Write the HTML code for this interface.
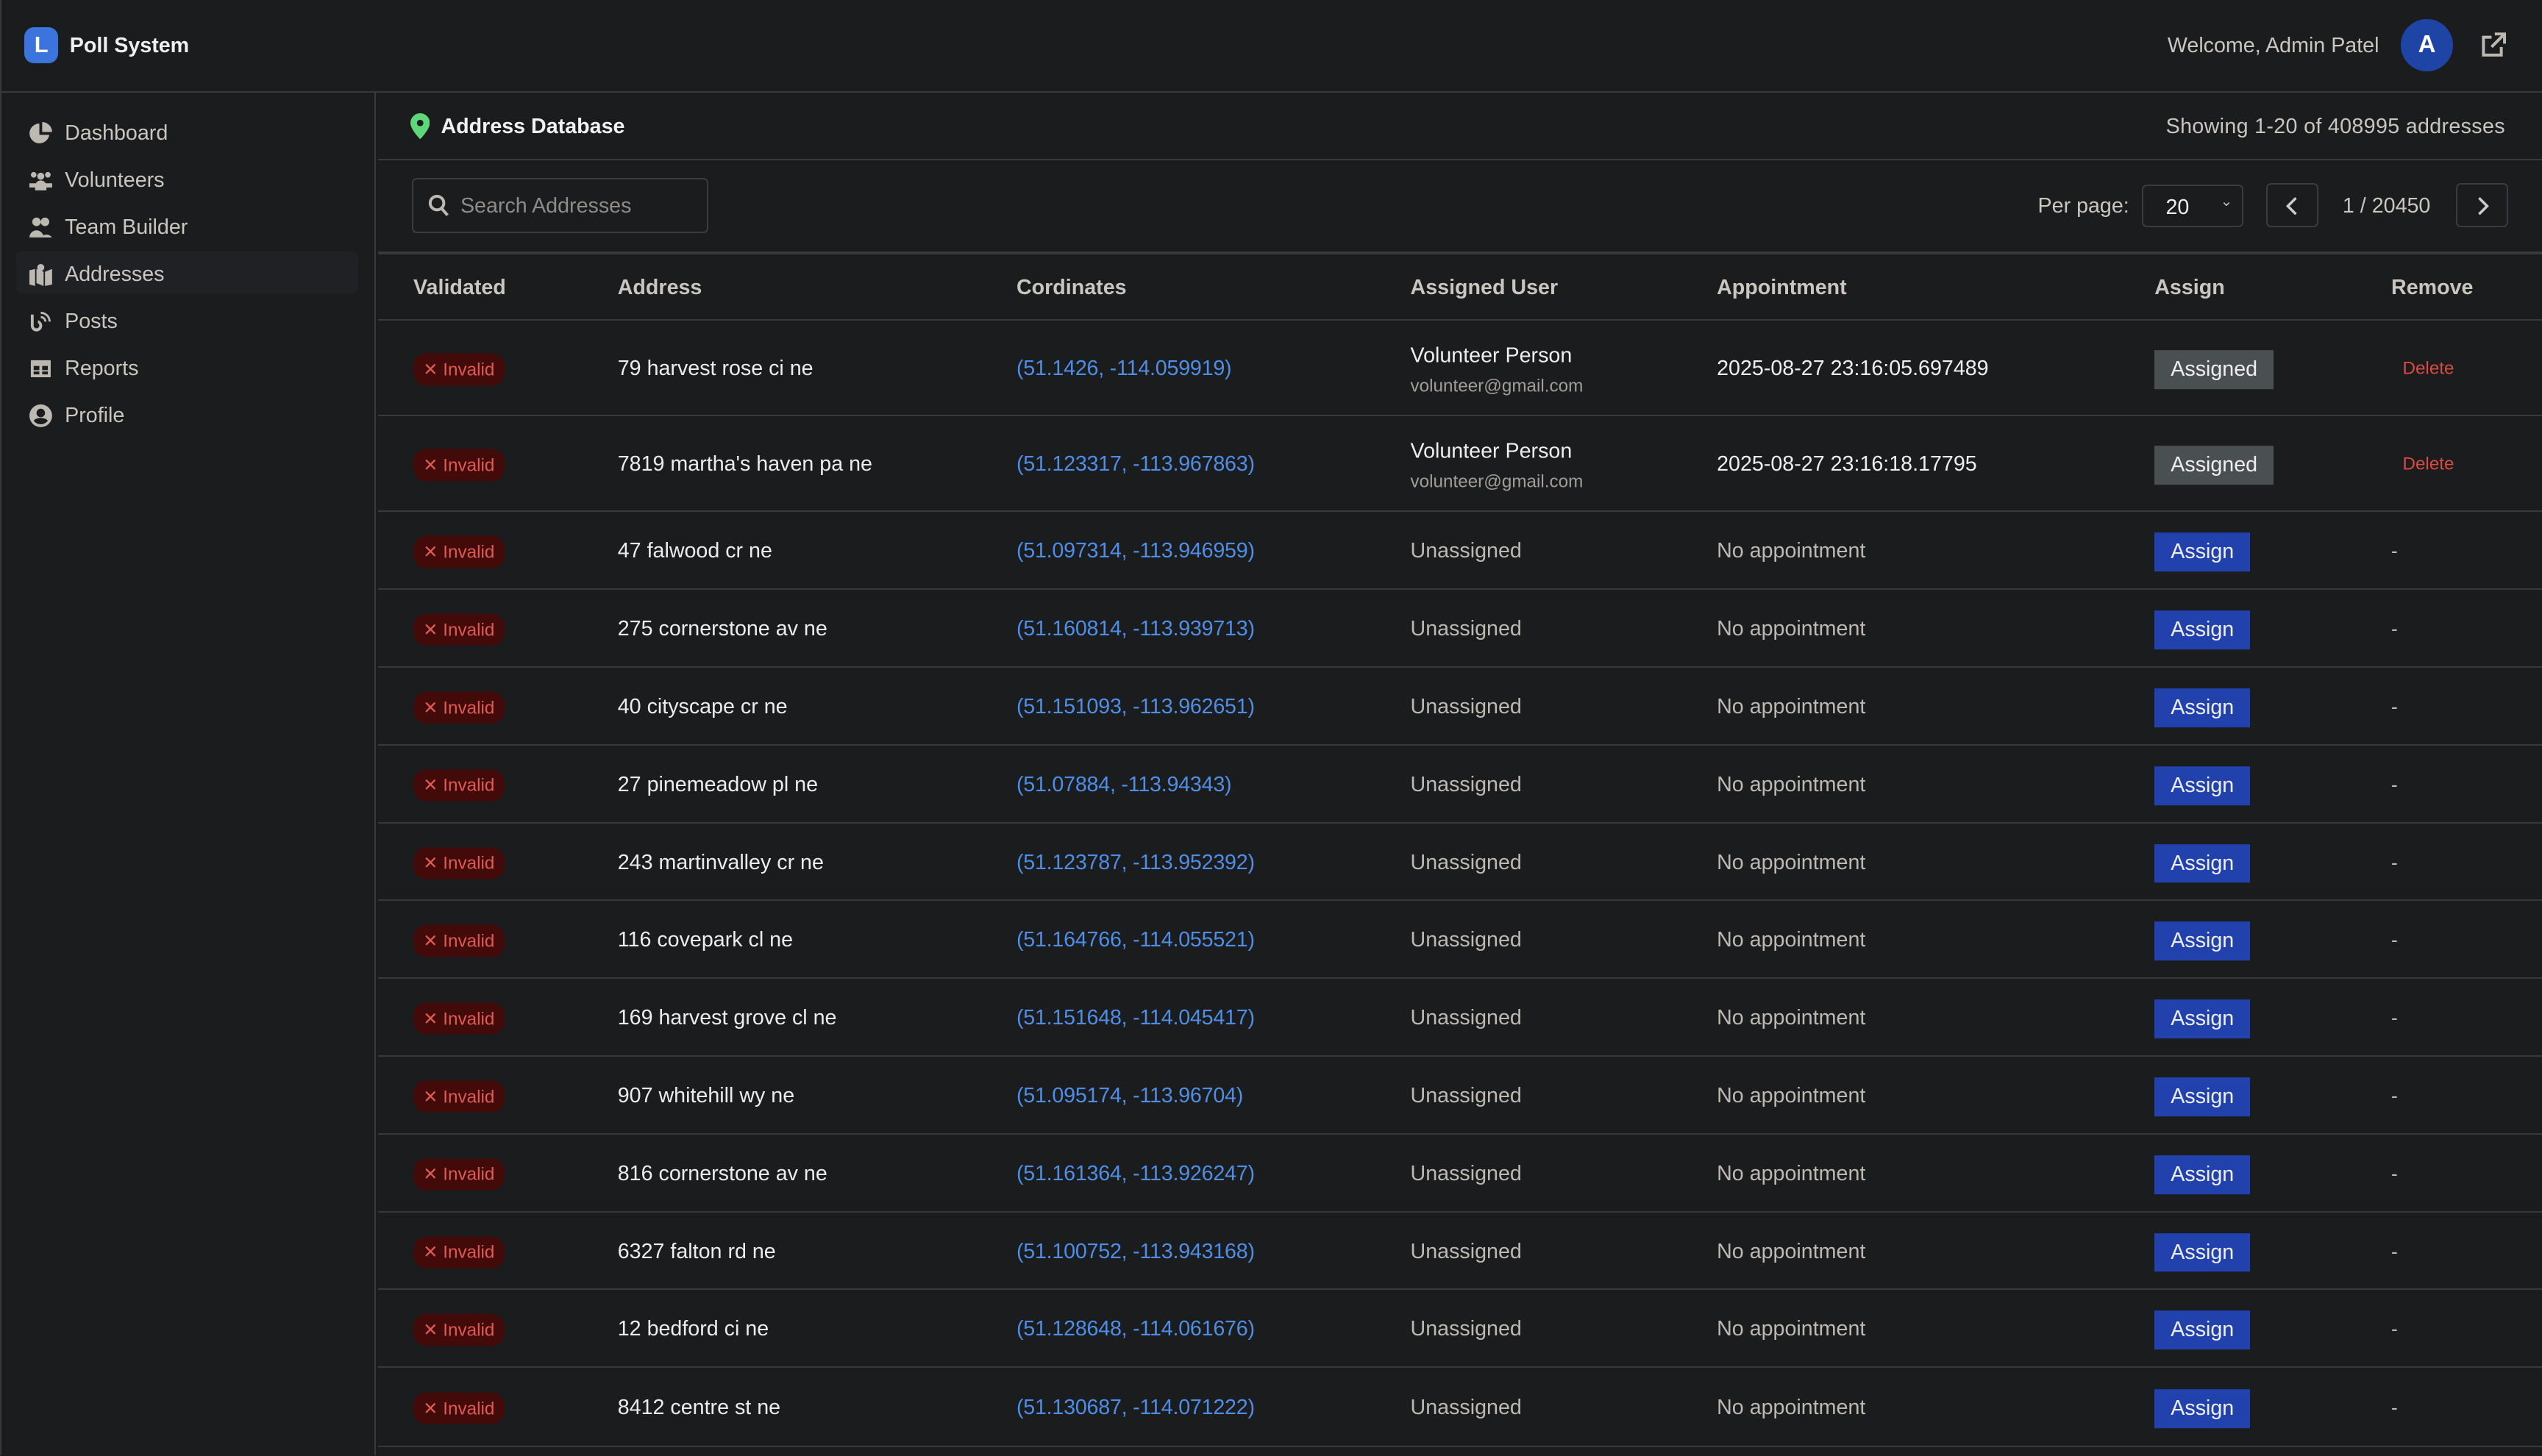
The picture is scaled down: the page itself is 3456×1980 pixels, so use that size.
<!DOCTYPE html>
<html><head><meta charset="utf-8"><style>
html{zoom:2.2041}
*{box-sizing:border-box;margin:0;padding:0}
body{width:1568px;height:898px;overflow:hidden;background:#1b1c1e;font-family:"Liberation Sans",sans-serif;color:#e6e6e6;font-size:13px;position:relative}
.abs{position:absolute}
.hdr{left:0;top:0;width:1568px;height:57px;border-bottom:1px solid #38393b;border-left:1px solid #38393b}
.side{left:0;top:57px;width:232px;height:841px;border-right:1px solid #38393b;border-left:1px solid #38393b}
.nav{position:absolute;left:18px;color:#c9c6c0;font-size:13px;display:flex;align-items:center}
.nav svg{width:14px;height:14px;margin-right:8px;fill:#bdb9b2}
.row{position:absolute;left:233px;width:1335px;border-bottom:1px solid #38393b}
.c{position:absolute;top:50%;transform:translateY(-45%);white-space:nowrap}
.bad{left:22px;background:#430a0a;color:#e05a55;font-size:11px;padding:3px 6px;border-radius:8px}
.addr{left:148px;color:#ececec}
.co{left:394px;color:#4f8ee6;letter-spacing:-0.1px}
.un{left:637px;color:#bcb9b3}
.ap{left:826px;color:#bcb9b3}
.btn{left:1096px;background:#2142ad;color:#eee;height:24px;line-height:24px;padding:0 10px}
.gbtn{left:1096px;background:#4a4f52;color:#eee;height:24px;line-height:24px;padding:0 10px}
.rm{left:1242px;color:#bbb;font-size:12px}
.del{left:1249px;color:#d94a42;font-size:11px}
</style></head><body>
<div class="abs hdr"></div>
<div class="abs" style="left:15px;top:17px;width:21px;height:22px;border-radius:6px;background:#3b74dc;color:#fff;font-weight:bold;font-size:14px;text-align:center;line-height:22px">L</div>
<div class="abs" style="left:43px;top:21px;font-size:13px;color:#f0f0f0;font-weight:600">Poll System</div>
<div class="abs" style="left:1337px;top:21px;color:#c9c6c0">Welcome, Admin Patel</div>
<div class="abs" style="left:1481px;top:12px;width:32px;height:32px;border-radius:50%;background:#1e44a6;color:#fff;font-weight:bold;text-align:center;line-height:32px;font-size:15px">A</div>
<svg class="abs" style="left:1530px;top:20px" width="16" height="16" viewBox="0 0 16 16" fill="none" stroke="#bdb9b2" stroke-width="1.8"><path d="M7 3H2v11h11V9"/><path d="M9 1h6v6M15 1L7 9"/></svg>
<div class="abs side"></div>
<div class="abs" style="left:10px;top:155px;width:211px;height:26px;background:#202124;border-radius:4px"></div>
<div class="nav" style="top:75px"><svg viewBox="0 0 16 16"><path d="M7 1a7 7 0 1 0 7 8H7z"/><path d="M9 0v7h7a7 7 0 0 0-7-7z"/></svg>Dashboard</div>
<div class="nav" style="top:104px"><svg viewBox="0 0 16 16"><circle cx="3" cy="4" r="2"/><circle cx="13" cy="4" r="2"/><circle cx="8" cy="5" r="2.5"/><path d="M0 10h5v3H0zM11 10h5v3h-5zM4 12a4 4 0 0 1 8 0v3H4z"/></svg>Volunteers</div>
<div class="nav" style="top:133px"><svg viewBox="0 0 16 16"><circle cx="5" cy="4" r="3"/><circle cx="11" cy="4" r="3"/><path d="M0 15a5 5 0 0 1 10 0zM8 15a5 5 0 0 1 8 0z"/></svg>Team Builder</div>
<div class="nav" style="top:162px"><svg viewBox="0 0 16 16"><path d="M0 5l4-1v12l-4-1zM5 4l5 2v10l-5-2zM11 6l5-2v11l-5 1z"/><circle cx="8" cy="3" r="2.5"/></svg>Addresses</div>
<div class="nav" style="top:191px"><svg viewBox="0 0 16 16"><path d="M1 3h2v8a2 2 0 1 0 3-2V7a4 4 0 1 1-5 4z"/><path d="M8 1a7 7 0 0 1 7 7h-1.5A5.5 5.5 0 0 0 8 2.5zM8 4a4 4 0 0 1 4 4h-1.5A2.5 2.5 0 0 0 8 5.5z"/></svg>Posts</div>
<div class="nav" style="top:220px"><svg viewBox="0 0 16 16"><path d="M1 2h14v12H1zM3 6v3h4V6zm6 0v3h4V6zM3 10v2h4v-2zm6 0v2h4v-2z" fill-rule="evenodd"/></svg>Reports</div>
<div class="nav" style="top:249px"><svg viewBox="0 0 16 16"><path d="M8 0a8 8 0 1 0 0 16A8 8 0 0 0 8 0zm0 3a3 3 0 1 1 0 6 3 3 0 0 1 0-6zm0 11a6 6 0 0 1-5-2.5c1-1.5 3-2 5-2s4 .5 5 2A6 6 0 0 1 8 14z"/></svg>Profile</div>

<div class="abs" style="left:233px;top:58px;width:1335px;height:41px;border-bottom:1px solid #38393b"></div>
<svg class="abs" style="left:253px;top:70px" width="12" height="16" viewBox="0 0 12 16"><path d="M6 0a6 6 0 0 0-6 6c0 4 6 10 6 10s6-6 6-10a6 6 0 0 0-6-6z" fill="#5fd67a"/><circle cx="6" cy="6" r="2" fill="#1b1c1e"/></svg>
<div class="abs" style="left:272px;top:71px;color:#f2f2f2;font-size:13px;font-weight:600">Address Database</div>
<div class="abs" style="left:1336px;top:71px;color:#c9c6c0;letter-spacing:0.15px">Showing 1-20 of 408995 addresses</div>

<div class="abs" style="left:233px;top:99px;width:1335px;height:58px;border-bottom:2px solid #38393b"></div>
<div class="abs" style="left:254px;top:110px;width:183px;height:34px;border:1px solid #3a3b3e;border-radius:3px"></div>
<svg class="abs" style="left:264px;top:120px" width="13" height="14" viewBox="0 0 13 14" fill="none" stroke="#bdb9b2" stroke-width="1.8"><circle cx="5.5" cy="5.5" r="4.2"/><path d="M8.5 9l3.5 4"/></svg>
<div class="abs" style="left:284px;top:120px;color:#8e8c88">Search Addresses</div>
<div class="abs" style="left:1257px;top:120px;color:#c9c6c0">Per page:</div>
<div class="abs" style="left:1321px;top:114px;width:63px;height:26px;border:1px solid #3a3b3e;border-radius:3px;color:#eee;padding:6px 0 0 14px">20<span style="position:absolute;right:6px;top:4px;font-size:9px;color:#bbb">&#8964;</span></div>
<div class="abs" style="left:1398px;top:113px;width:32px;height:27px;border:1px solid #3a3b3e;border-radius:3px"></div>
<svg class="abs" style="left:1409px;top:121px" width="9" height="12" viewBox="0 0 9 12" fill="none" stroke="#ccc" stroke-width="1.6"><path d="M7 1L2 6l5 5"/></svg>
<div class="abs" style="left:1445px;top:120px;color:#c9c6c0">1 / 20450</div>
<div class="abs" style="left:1515px;top:113px;width:32px;height:27px;border:1px solid #3a3b3e;border-radius:3px"></div>
<svg class="abs" style="left:1527px;top:121px" width="9" height="12" viewBox="0 0 9 12" fill="none" stroke="#ccc" stroke-width="1.6"><path d="M2 1l5 5-5 5"/></svg>

<div class="row" style="top:157px;height:41px;font-weight:bold;color:#c9c6c0">
<div class="c" style="left:22px">Validated</div><div class="c" style="left:148px">Address</div><div class="c" style="left:394px">Cordinates</div><div class="c" style="left:637px">Assigned User</div><div class="c" style="left:826px">Appointment</div><div class="c" style="left:1096px">Assign</div><div class="c" style="left:1242px">Remove</div></div>

<div class="row" style="top:198px;height:59px"><span class="c bad">✕ Invalid</span><span class="c addr">79 harvest rose ci ne</span><span class="c co">(51.1426, -114.059919)</span><div class="c" style="left:637px"><div style="color:#eee">Volunteer Person</div><div style="color:#a19e99;font-size:11px;margin-top:5px">volunteer@gmail.com</div></div><span class="c" style="left:826px;color:#eee">2025-08-27 23:16:05.697489</span><span class="c gbtn">Assigned</span><span class="c del">Delete</span></div>
<div class="row" style="top:257px;height:59px"><span class="c bad">✕ Invalid</span><span class="c addr">7819 martha's haven pa ne</span><span class="c co">(51.123317, -113.967863)</span><div class="c" style="left:637px"><div style="color:#eee">Volunteer Person</div><div style="color:#a19e99;font-size:11px;margin-top:5px">volunteer@gmail.com</div></div><span class="c" style="left:826px;color:#eee">2025-08-27 23:16:18.17795</span><span class="c gbtn">Assigned</span><span class="c del">Delete</span></div>

<div class="row" style="top:316px;height:48px"><span class="c bad">✕ Invalid</span><span class="c addr">47 falwood cr ne</span><span class="c co">(51.097314, -113.946959)</span><span class="c un">Unassigned</span><span class="c ap">No appointment</span><span class="c btn">Assign</span><span class="c rm">-</span></div>
<div class="row" style="top:364px;height:48px"><span class="c bad">✕ Invalid</span><span class="c addr">275 cornerstone av ne</span><span class="c co">(51.160814, -113.939713)</span><span class="c un">Unassigned</span><span class="c ap">No appointment</span><span class="c btn">Assign</span><span class="c rm">-</span></div>
<div class="row" style="top:412px;height:48px"><span class="c bad">✕ Invalid</span><span class="c addr">40 cityscape cr ne</span><span class="c co">(51.151093, -113.962651)</span><span class="c un">Unassigned</span><span class="c ap">No appointment</span><span class="c btn">Assign</span><span class="c rm">-</span></div>
<div class="row" style="top:460px;height:48px"><span class="c bad">✕ Invalid</span><span class="c addr">27 pinemeadow pl ne</span><span class="c co">(51.07884, -113.94343)</span><span class="c un">Unassigned</span><span class="c ap">No appointment</span><span class="c btn">Assign</span><span class="c rm">-</span></div>
<div class="row" style="top:508px;height:48px"><span class="c bad">✕ Invalid</span><span class="c addr">243 martinvalley cr ne</span><span class="c co">(51.123787, -113.952392)</span><span class="c un">Unassigned</span><span class="c ap">No appointment</span><span class="c btn">Assign</span><span class="c rm">-</span></div>
<div class="row" style="top:556px;height:48px"><span class="c bad">✕ Invalid</span><span class="c addr">116 covepark cl ne</span><span class="c co">(51.164766, -114.055521)</span><span class="c un">Unassigned</span><span class="c ap">No appointment</span><span class="c btn">Assign</span><span class="c rm">-</span></div>
<div class="row" style="top:604px;height:48px"><span class="c bad">✕ Invalid</span><span class="c addr">169 harvest grove cl ne</span><span class="c co">(51.151648, -114.045417)</span><span class="c un">Unassigned</span><span class="c ap">No appointment</span><span class="c btn">Assign</span><span class="c rm">-</span></div>
<div class="row" style="top:652px;height:48px"><span class="c bad">✕ Invalid</span><span class="c addr">907 whitehill wy ne</span><span class="c co">(51.095174, -113.96704)</span><span class="c un">Unassigned</span><span class="c ap">No appointment</span><span class="c btn">Assign</span><span class="c rm">-</span></div>
<div class="row" style="top:700px;height:48px"><span class="c bad">✕ Invalid</span><span class="c addr">816 cornerstone av ne</span><span class="c co">(51.161364, -113.926247)</span><span class="c un">Unassigned</span><span class="c ap">No appointment</span><span class="c btn">Assign</span><span class="c rm">-</span></div>
<div class="row" style="top:748px;height:48px"><span class="c bad">✕ Invalid</span><span class="c addr">6327 falton rd ne</span><span class="c co">(51.100752, -113.943168)</span><span class="c un">Unassigned</span><span class="c ap">No appointment</span><span class="c btn">Assign</span><span class="c rm">-</span></div>
<div class="row" style="top:796px;height:48px"><span class="c bad">✕ Invalid</span><span class="c addr">12 bedford ci ne</span><span class="c co">(51.128648, -114.061676)</span><span class="c un">Unassigned</span><span class="c ap">No appointment</span><span class="c btn">Assign</span><span class="c rm">-</span></div>
<div class="row" style="top:844px;height:49px"><span class="c bad">✕ Invalid</span><span class="c addr">8412 centre st ne</span><span class="c co">(51.130687, -114.071222)</span><span class="c un">Unassigned</span><span class="c ap">No appointment</span><span class="c btn">Assign</span><span class="c rm">-</span></div>
</body></html>
